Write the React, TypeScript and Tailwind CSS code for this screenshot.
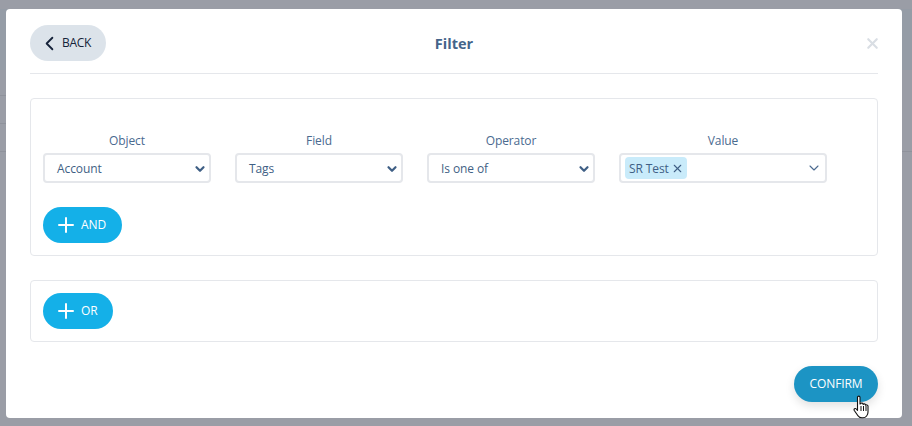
import React from "react";
import { ChevronLeft, ChevronDown, Plus, X } from "lucide-react";

const fields = [
  { label: "Object", value: "Account" },
  { label: "Field", value: "Tags" },
  { label: "Operator", value: "Is one of" },
];

function HandCursor() {
  return (
    <svg className="absolute left-[853px] top-[395px]" width="19" height="24" viewBox="0 0 19 24">
      <path
        d="M4.5 2.200c0-1.500 2.500-1.500 2.500 0V9l.6-.2c.2-1 2.200-1 2.400 0l.1.6c.4-.8 2.200-.7 2.400.3l.1.6c.5-.7 2.300-.5 2.400.7V17c0 3-2 5.800-5 5.800H9c-2 0-3.300-1-4.400-2.500L1.300 15.500c-.9-1.500 1-2.600 2-1.500l1.200 1.300z"
        fill="#fff"
        stroke="#111"
        strokeWidth="1.1"
        strokeLinejoin="round"
      />
      <path d="M8 11v5M10.500 11v5M13 11v5" stroke="#111" strokeWidth="1" fill="none" />
    </svg>
  );
}

export default function App() {
  return (
    <div className="relative w-[912px] h-[426px] overflow-hidden bg-[#9a9da6] font-['Open_Sans','Noto_Sans',sans-serif]">
      {/* page behind the scrim */}
      <div className="h-[9px]" />
      <div className="h-[61px] bg-[#959ca6]" />
      <div className="mt-[25px] h-px w-[6px] bg-[#8f929b]" />
      <div className="mt-[27px] h-px w-[6px] bg-[#8f929b]" />
      <div className="mt-[27px] h-px bg-[#8f929b]" />

      <div className="absolute left-[6px] top-[9px] w-[896px] h-[409px] bg-white rounded-[4px] px-6 pt-4 flex flex-col">
        {/* Header */}
        <div className="relative flex items-center justify-center pb-3 border-b border-[#e5e7eb]">
          <button className="absolute left-0 top-0 h-9 w-[76px] rounded-full bg-[#dce3ea] flex items-center pl-2 gap-[1px] text-[12px] tracking-[-0.3px] text-[#16233a]">
            <ChevronLeft size={23} strokeWidth={1.9} className="text-[#16233a]" />
            <span>BACK</span>
          </button>
          <h2 className="h-9 pt-px leading-9 text-[14.500px] font-bold text-[#44648a]">Filter</h2>
          <X size={17} strokeWidth={3} className="absolute right-[-2.500px] top-[9.500px] text-[#d9dee4]" />
        </div>

        {/* AND group */}
        <div className="mt-6 border border-[#e5e7eb] rounded-[4px] px-3 pt-[33px] pb-3">
          <div className="flex gap-6">
            {fields.map((f) => (
              <div key={f.label} className="w-[168px]">
                <div className="h-5 mb-px text-center text-[12px] tracking-[-0.1px] leading-[18px] text-[#4a6a8f]">{f.label}</div>
                <div className="h-[30px] pt-px border-2 border-[#e5e7eb] rounded-[4px] flex items-center justify-between pl-3 pr-[2px] text-[12px] tracking-[-0.1px] text-[#3f5f85]">
                  <span>{f.value}</span>
                  <ChevronDown size={14} strokeWidth={3.8} className="text-[#3f5f85]" />
                </div>
              </div>
            ))}
            <div className="w-[208px]">
              <div className="h-5 mb-px text-center text-[12px] tracking-[-0.1px] leading-[18px] text-[#4a6a8f]">Value</div>
              <div className="h-[30px] border-2 border-[#e5e7eb] rounded-[4px] flex items-center justify-between pl-1 pr-[3px] text-[12px] tracking-[-0.1px] text-[#3f5f85]">
                <span className="h-[22px] w-[62px] pt-px rounded-[4px] bg-[#c9ebfa] flex items-center pl-1 gap-[2px]">
                  SR Test
                  <X size={13} strokeWidth={2} className="-mt-px" />
                </span>
                <ChevronDown size={16} strokeWidth={1.6} className="text-[#4a6a8f]" />
              </div>
            </div>
          </div>
          <button className="mt-6 h-9 w-[79px] rounded-full bg-[#14b0e8] flex items-center pl-[11px] gap-[3px] text-[12px] tracking-[-0.1px] text-white">
            <Plus size={24} strokeWidth={2} />
            AND
          </button>
        </div>

        {/* OR group */}
        <div className="mt-6 border border-[#e5e7eb] rounded-[4px] px-3 py-3">
          <button className="h-9 w-[70px] rounded-full bg-[#14b0e8] flex items-center pl-[11px] gap-[3px] text-[12px] tracking-[-0.1px] text-white">
            <Plus size={24} strokeWidth={2} />
            OR
          </button>
        </div>

        <div className="mt-6 flex justify-end">
          <button className="h-9 w-[84px] rounded-full bg-[#1c94c4] text-[12px] tracking-[-0.1px] text-white shadow-[0_4px_10px_rgba(0,0,0,0.12)]">
            CONFIRM
          </button>
        </div>
      </div>
      <HandCursor />
    </div>
  );
}
